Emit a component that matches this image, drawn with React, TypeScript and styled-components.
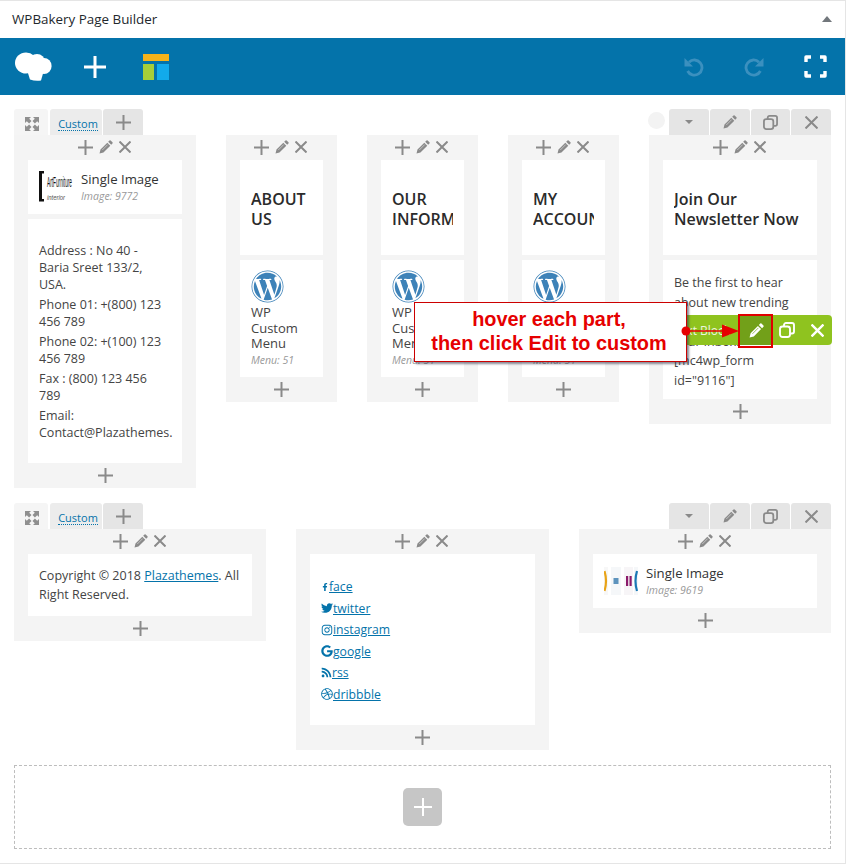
import React from "react";
import styled, { createGlobalStyle } from "styled-components";
import { FaWordpress, FaFacebookF, FaTwitter, FaInstagram, FaGoogle, FaRss, FaDribbble } from "react-icons/fa";

const Global = createGlobalStyle`
  html, body { margin: 0; padding: 0; background: #fff; }
  body { font-family: "Open Sans", "Noto Sans", sans-serif; color: #444; font-size: 12.5px; }
  * { box-sizing: border-box; }
`;

const Shell = styled.div`
  position: relative;
  width: 846px;
  height: 864px;
  background: #fff;
  border-top: 1px solid #e5e5e5;
  border-right: 1px solid #e5e5e5;
  border-bottom: 1px solid #e5e5e5;
  overflow: hidden;
`;
const TitleBar = styled.div`
  height: 37px;
  display: flex;
  align-items: center;
  justify-content: space-between;
  padding: 0 13px 1px 12px;
`;
const Title = styled.h2`
  margin: 0;
  font-size: 13.4px;
  font-weight: 400;
  color: #23282d;
`;
const Triangle = styled.span`
  width: 0;
  height: 0;
  border-left: 5px solid transparent;
  border-right: 5px solid transparent;
  border-bottom: 6px solid #72777c;
`;
const Toolbar = styled.div`
  height: 57px;
  background: #0473aa;
  display: flex;
  align-items: center;
  padding: 0 18px 0 15px;
`;
const ToolLeft = styled.div`
  display: flex;
  align-items: center;
`;
const ToolAddSlot = styled.div`
  display: flex;
  margin: 0 37px 0 32px;
`;
const ToolRight = styled.div`
  margin-left: auto;
  display: flex;
  align-items: center;
  gap: 40px;
`;
const Canvas = styled.div`
  padding: 14px 14px 0;
  display: flex;
  flex-direction: column;
  gap: 15px;
`;
const Row = styled.section``;
const RowControls = styled.div`
  height: 26px;
  display: flex;
  align-items: stretch;
`;
const DragTab = styled.div`
  width: 34px;
  background: #f5f5f5;
  border-radius: 3px 3px 0 0;
  display: flex;
  align-items: center;
  justify-content: center;
  padding: 3px 0 0 1px;
`;
const LayoutTab = styled.div`
  width: 52px;
  margin-left: 2px;
  background: #ececec;
  border-radius: 3px 3px 0 0;
  display: flex;
  align-items: center;
  justify-content: center;
  padding: 4px 0 0 4px;
`;
const CustomLabel = styled.span`
  color: #0473aa;
  font-size: 11px;
  line-height: 13px;
  border-bottom: 1px dotted #0473aa;
`;
const AddTab = styled.div`
  width: 40px;
  margin-left: 1px;
  background: #e5e5e5;
  border-radius: 3px 3px 0 0;
  display: flex;
  align-items: center;
  justify-content: center;
`;
const RowActions = styled.div`
  margin-left: auto;
  display: flex;
  gap: 1px;
  align-items: stretch;
`;
const StatusDot = styled.span`
  width: 17px;
  height: 17px;
  border-radius: 50%;
  background: #f3f3f3;
  margin: 3px 3px 0 0;
`;
const ActionTab = styled.div`
  width: 39.75px;
  background: #e5e5e5;
  border-radius: 3px 3px 0 0;
  display: flex;
  align-items: center;
  justify-content: center;
`;
const Caret = styled.span`
  width: 0;
  height: 0;
  border-left: 4px solid transparent;
  border-right: 4px solid transparent;
  border-top: 4px solid #8a8a8a;
`;
const Columns = styled.div`
  display: flex;
  align-items: flex-start;
  gap: 30px;
`;
const Column = styled.div<{ $w: number }>`
  width: ${(p) => p.$w}px;
  background: #f4f4f4;
  padding: 0 14px;
  flex: none;
`;
const ColumnControls = styled.div`
  height: 25px;
  display: flex;
  align-items: center;
  justify-content: center;
  gap: 6px;
  padding: 0 2px 1px 0;
`;
const ColumnAdd = styled.div`
  height: 25px;
  display: flex;
  align-items: center;
  justify-content: center;
`;
const Stack = styled.div`
  display: flex;
  flex-direction: column;
  gap: 5px;
`;
const Element = styled.div`
  background: #fff;
  padding: 0 11px;
`;
const ImageElement = styled(Element)`
  height: 54px;
  display: flex;
  align-items: center;
  gap: 8px;
`;
const Thumb = styled.svg`
  width: 34px;
  height: 36px;
  flex: none;
`;
const ElementName = styled.div`
  font-size: 13.2px;
  line-height: 17px;
  color: #333;
`;
const ElementMeta = styled.div`
  font-size: 10.5px;
  line-height: 16px;
  font-style: italic;
  color: #999;
`;
const HeadingElement = styled(Element)`
  height: 95px;
  padding-top: 29px;
`;
const HeadingClip = styled.div`
  overflow: hidden;
  font-size: 16px;
  line-height: 20px;
  font-weight: 600;
  color: #2b2b2b;
`;
const NoWrap = styled.span`
  white-space: nowrap;
`;
const MenuElement = styled(Element)`
  height: 117px;
  padding-top: 10px;
`;
const MenuLogo = styled.div`
  height: 33px;
  display: flex;
`;
const MenuName = styled.div`
  font-size: 13px;
  line-height: 15.5px;
  color: #444;
  margin-top: 2px;
`;
const TextElement = styled(Element)<{ $h?: number; $lh: number; $pt: number }>`
  height: ${(p) => (p.$h ? `${p.$h}px` : "auto")};
  padding-top: ${(p) => p.$pt}px;
  padding-bottom: 12px;
  font-size: 12.5px;
  line-height: ${(p) => p.$lh}px;
  color: #444;
`;
const Para = styled.p`
  margin: 0 0 3px;
`;
const BlueLink = styled.a`
  color: #0473aa;
  text-decoration: underline;
`;
const SocialList = styled.div`
  height: 171px;
  background: #fff;
  padding: 22px 11px 0;
  display: flex;
  flex-direction: column;
`;
const SocialRow = styled.div`
  height: 21.5px;
  line-height: 21.5px;
  font-size: 12.2px;
  display: flex;
  align-items: center;
  color: #0473aa;
`;
const EmptyRow = styled.div`
  height: 84px;
  border: 1px dashed #bdbdbd;
  display: flex;
  align-items: center;
  justify-content: center;
`;
const BigAdd = styled.div`
  width: 39px;
  height: 38px;
  background: #c6c6c6;
  border-radius: 5px;
  display: flex;
  align-items: center;
  justify-content: center;
`;
const HoverBar = styled.div`
  position: absolute;
  left: 664px;
  top: 314px;
  width: 168px;
  height: 30px;
  background: #8fc31f;
  border-radius: 0 4px 4px 0;
  display: flex;
  align-items: center;
  color: #fff;
  font-size: 12px;
  padding-left: 9px;
`;
const HoverLabel = styled.span`
  width: 67px;
  white-space: nowrap;
  opacity: 0.85;
`;
const HoverEdit = styled.div`
  width: 32px;
  height: 30px;
  background: #72a019;
  display: flex;
  align-items: center;
  justify-content: center;
`;
const HoverIcon = styled.div`
  width: 30px;
  height: 30px;
  display: flex;
  align-items: center;
  justify-content: center;
`;
const RedFrame = styled.div`
  position: absolute;
  left: 738px;
  top: 313px;
  width: 35px;
  height: 34px;
  border: 2px solid #e00000;
`;
const Callout = styled.div`
  position: absolute;
  left: 414px;
  top: 301px;
  width: 273px;
  height: 60px;
  background: #fff;
  border: 1px solid #cc0000;
  box-shadow: 2px 2px 2px rgba(60, 60, 80, 0.6);
  display: flex;
  align-items: center;
  justify-content: center;
  text-align: center;
  padding: 0 3px 2px 0;
  font-family: "Liberation Sans", Arial, sans-serif;
  font-weight: 700;
  font-size: 19.9px;
  line-height: 24px;
  color: #e60000;
`;
const Arrow = styled.svg`
  position: absolute;
  left: 677px;
  top: 320px;
  width: 64px;
  height: 22px;
`;
const IconBox = styled.span`
  display: inline-flex;
  flex: none;
`;

const Plus = ({ s = 15, c = "#8a8a8a", w = 2 }: { s?: number; c?: string; w?: number }) => (
  <svg width={s} height={s} viewBox="0 0 16 16">
    <path d="M8 0v16M0 8h16" stroke={c} strokeWidth={(w * 16) / s} fill="none" />
  </svg>
);
const Pencil = ({ s = 14, c = "#8a8a8a" }: { s?: number; c?: string }) => (
  <svg width={s} height={s} viewBox="0 0 16 16">
    <path d="M12 .6a1 1 0 0 1 1.3 0l2.1 2.1a1 1 0 0 1 0 1.3l-1.5 1.5-3.4-3.4zM9.5 3.1l3.4 3.4-7.8 7.8L.6 15.4l1.1-4.5z" fill={c} />
    <path d="M3.7 11.5l6.3-6.3" stroke={c === "#fff" ? "#72a019" : "#e4e4e4"} strokeWidth="1" opacity="0.75" />
  </svg>
);
const Cross = ({ s = 12, c = "#8a8a8a", w = 2 }: { s?: number; c?: string; w?: number }) => (
  <svg width={s} height={s} viewBox="0 0 12 12">
    <path d="M0.5 0.5l11 11M11.5 0.5l-11 11" stroke={c} strokeWidth={(w * 12) / s} fill="none" />
  </svg>
);
const Copy = ({ s = 15, c = "#8a8a8a" }: { s?: number; c?: string }) => (
  <svg width={s} height={s} viewBox="0 0 16 16" fill="none" stroke={c} strokeWidth="1.9">
    <rect x="1" y="4.5" width="10" height="10.5" rx="2.5" />
    <path d="M5 4.5V3a2 2 0 0 1 2-2h6a2 2 0 0 1 2 2v6.5a2 2 0 0 1-2 2h-2" />
  </svg>
);
const Expand = () => (
  <svg width="14" height="14" viewBox="0 0 14 14" fill="#8f8f8f">
    <path d="M0 0h6L4.2 1.8 6.5 4.1 4.1 6.5 1.8 4.2 0 6zM14 0v6l-1.8-1.8-2.3 2.3-2.4-2.4 2.3-2.3L8 0zM0 14V8l1.8 1.8 2.3-2.3 2.4 2.4-2.3 2.3L6 14zM14 14H8l1.8-1.8-2.3-2.3 2.4-2.4 2.3 2.3L14 8z" />
  </svg>
);

const ChefHat = () => (
  <svg width="37" height="29" viewBox="0 0 37 29" fill="#fff">
    <ellipse cx="11" cy="11" rx="11" ry="10.5" />
    <ellipse cx="22" cy="10" rx="8" ry="8" />
    <ellipse cx="29" cy="14" rx="7.6" ry="8" />
    <path d="M12 18h17l-3 10.5q-6 .8-11-1z" />
    <ellipse cx="16" cy="14" rx="10" ry="7" />
  </svg>
);
const LayoutIcon = () => (
  <svg width="26" height="26" viewBox="0 0 26 26">
    <rect x="0" y="0" width="26" height="7" fill="#f6b31a" />
    <rect x="0" y="10" width="11" height="16" fill="#a6ce39" />
    <rect x="14" y="10" width="12" height="16" fill="#12aaeb" />
  </svg>
);
const Undo = ({ flip }: { flip?: boolean }) => (
  <svg width="20" height="20" viewBox="0 0 20 20" fill="none" style={flip ? { transform: "scaleX(-1)" } : undefined}>
    <path d="M5 5.2A7.6 7.6 0 1 1 3.6 14" stroke="#3b90bf" strokeWidth="2.8" />
    <path d="M0.5 1v8.5H9z" fill="#3b90bf" />
  </svg>
);
const FullScreen = () => (
  <svg width="23" height="23" viewBox="0 0 23 23" fill="none" stroke="#fff" strokeWidth="3.4" strokeLinejoin="round">
    <path d="M2 7V2h5M16 2h5v5M2 16v5h5M16 21h5v-5" />
  </svg>
);
const FurnitureThumb = () => (
  <Thumb viewBox="0 0 34 36">
    <path d="M0 2h5v2.5H3V30h2v2.5H0z" fill="#111" />
    <text x="8" y="18" fontFamily="Liberation Sans Narrow, Liberation Sans, sans-serif" fontSize="15" fill="#111" textLength="25" lengthAdjust="spacingAndGlyphs">ArtFurniture</text>
    <text x="8" y="31" fontFamily="Liberation Sans, sans-serif" fontSize="7" fontStyle="italic" fill="#555" textLength="18" lengthAdjust="spacingAndGlyphs">interior</text>
  </Thumb>
);
const BrandsThumb = () => (
  <Thumb viewBox="0 0 34 36">
    <rect x="0" y="4" width="4" height="28" fill="#f7f7f7" />
    <rect x="7" y="4" width="10" height="28" fill="#f5f7f9" />
    <rect x="20" y="4" width="9" height="28" fill="#f7f5f7" />
    <rect x="30" y="4" width="4" height="28" fill="#f5f7f9" />
    <path d="M0.5 8q3 10 0 20" stroke="#e8a317" strokeWidth="2.2" fill="none" />
    <rect x="9.5" y="15" width="5" height="6" fill="#5d93bd" />
    <rect x="22" y="13" width="2.2" height="10" fill="#8b1a6b" />
    <rect x="25.5" y="13" width="2.2" height="10" fill="#8b1a6b" />
    <path d="M33 8q-3 10 0 20" stroke="#1b79b5" strokeWidth="2.2" fill="none" />
  </Thumb>
);

const ColControls = () => (
  <ColumnControls>
    <Plus />
    <Pencil />
    <Cross />
  </ColumnControls>
);
const ColAdd = () => (
  <ColumnAdd>
    <Plus />
  </ColumnAdd>
);

const RowHead = ({ dot }: { dot?: boolean }) => (
  <RowControls>
    <DragTab><Expand /></DragTab>
    <LayoutTab><CustomLabel>Custom</CustomLabel></LayoutTab>
    <AddTab><Plus /></AddTab>
    <RowActions>
      {dot && <StatusDot />}
      <ActionTab><Caret /></ActionTab>
      <ActionTab><Pencil /></ActionTab>
      <ActionTab><Copy /></ActionTab>
      <ActionTab><Cross s={13} /></ActionTab>
    </RowActions>
  </RowControls>
);

const ImageBlock = ({ id, thumb }: { id: string; thumb: React.ReactNode }) => (
  <ImageElement>
    {thumb}
    <div>
      <ElementName>Single Image</ElementName>
      <ElementMeta>Image: {id}</ElementMeta>
    </div>
  </ImageElement>
);

const MenuColumn = ({ a, b }: { a: string; b: string }) => (
  <Column $w={111}>
    <ColControls />
    <Stack>
      <HeadingElement>
        <HeadingClip>
          <NoWrap>{a}</NoWrap>
          <br />
          <NoWrap>{b}</NoWrap>
        </HeadingClip>
      </HeadingElement>
      <MenuElement>
        <MenuLogo><FaWordpress size={33} color="#3d82b8" /></MenuLogo>
        <MenuName>WP Custom Menu</MenuName>
        <ElementMeta>Menu: 51</ElementMeta>
      </MenuElement>
    </Stack>
    <ColAdd />
  </Column>
);

const socials = [
  { Icon: FaFacebookF, label: "face", s: 8 },
  { Icon: FaTwitter, label: "twitter", s: 12 },
  { Icon: FaInstagram, label: "instagram", s: 12 },
  { Icon: FaGoogle, label: "google", s: 12 },
  { Icon: FaRss, label: "rss", s: 11 },
  { Icon: FaDribbble, label: "dribbble", s: 12 },
];

export default function App() {
  return (
    <>
      <Global />
      <Shell>
        <TitleBar>
          <Title>WPBakery Page Builder</Title>
          <Triangle />
        </TitleBar>
        <Toolbar>
          <ToolLeft>
            <ChefHat />
            <ToolAddSlot><Plus s={22} c="#fff" w={3} /></ToolAddSlot>
            <LayoutIcon />
          </ToolLeft>
          <ToolRight>
            <Undo />
            <Undo flip />
            <FullScreen />
          </ToolRight>
        </Toolbar>
        <Canvas>
          <Row>
            <RowHead dot />
            <Columns>
              <Column $w={182}>
                <ColControls />
                <Stack>
                  <ImageBlock id="9772" thumb={<FurnitureThumb />} />
                  <TextElement $h={244} $lh={17} $pt={23}>
                    <Para>Address : No 40 - Baria Sreet 133/2, USA.</Para>
                    <Para>Phone 01: +(800) 123 456 789</Para>
                    <Para>Phone 02: +(100) 123 456 789</Para>
                    <Para>Fax : (800) 123 456 789</Para>
                    <Para>Email: Contact@Plazathemes.</Para>
                  </TextElement>
                </Stack>
                <ColAdd />
              </Column>
              <MenuColumn a="ABOUT" b="US" />
              <MenuColumn a="OUR" b="INFORMATION" />
              <MenuColumn a="MY" b="ACCOUNT" />
              <Column $w={182}>
                <ColControls />
                <Stack>
                  <HeadingElement>
                    <HeadingClip>Join Our Newsletter Now</HeadingClip>
                  </HeadingElement>
                  <TextElement $h={139} $lh={19.5} $pt={13}>
                    Be the first to hear about new trending styles and offers to your inbox. [mc4wp_form id="9116"]
                  </TextElement>
                </Stack>
                <ColAdd />
              </Column>
            </Columns>
          </Row>
          <Row>
            <RowHead />
            <Columns>
              <Column $w={252}>
                <ColControls />
                <TextElement $lh={19} $pt={12}>
                  Copyright © 2018 <BlueLink>Plazathemes</BlueLink>. All Right Reserved.
                </TextElement>
                <ColAdd />
              </Column>
              <Column $w={253}>
                <ColControls />
                <SocialList>
                  {socials.map(({ Icon, label, s }) => (
                    <SocialRow key={label}>
                      <IconBox><Icon size={s} /></IconBox>
                      <BlueLink>{label}</BlueLink>
                    </SocialRow>
                  ))}
                </SocialList>
                <ColAdd />
              </Column>
              <Column $w={252}>
                <ColControls />
                <ImageBlock id="9619" thumb={<BrandsThumb />} />
                <ColAdd />
              </Column>
            </Columns>
          </Row>
          <EmptyRow>
            <BigAdd><Plus s={18} c="#fff" w={2} /></BigAdd>
          </EmptyRow>
        </Canvas>
        <HoverBar>
          <HoverLabel>Text Block</HoverLabel>
          <HoverEdit><Pencil s={15} c="#fff" /></HoverEdit>
          <HoverIcon><Copy s={16} c="#fff" /></HoverIcon>
          <HoverIcon><Cross s={13} c="#fff" w={2.4} /></HoverIcon>
        </HoverBar>
        <RedFrame />
        <Callout>
          <div>hover each part,<br />then click Edit to custom</div>
        </Callout>
        <Arrow viewBox="0 0 64 22">
          <circle cx="9" cy="10" r="4.5" fill="#e60000" />
          <path d="M9 10h40" stroke="#e60000" strokeWidth="1.5" />
          <path d="M45 3.5l17 6.5-17 6.5z" fill="#e60000" />
        </Arrow>
      </Shell>
    </>
  );
}
